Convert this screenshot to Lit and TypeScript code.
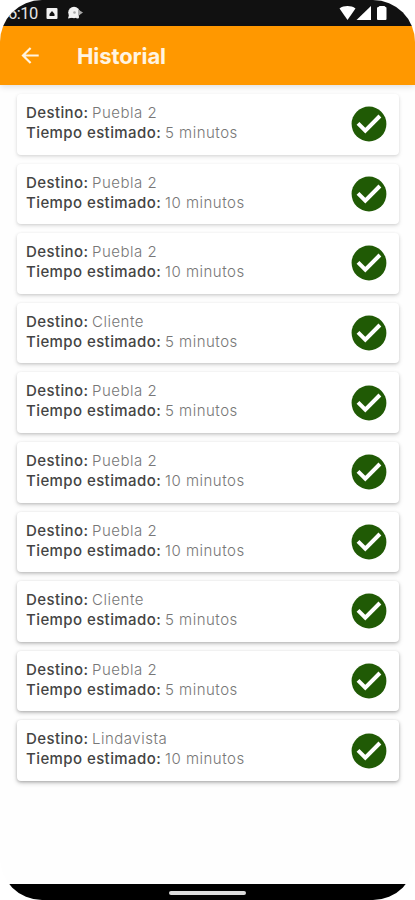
import { LitElement, html, css } from "lit";
import { customElement, property } from "lit/decorators.js";

interface Trip {
  place: string;
  time: string;
}

const trips: Trip[] = [
  { place: "Puebla 2", time: "5 minutos" },
  { place: "Puebla 2", time: "10 minutos" },
  { place: "Puebla 2", time: "10 minutos" },
  { place: "Cliente", time: "5 minutos" },
  { place: "Puebla 2", time: "5 minutos" },
  { place: "Puebla 2", time: "10 minutos" },
  { place: "Puebla 2", time: "10 minutos" },
  { place: "Cliente", time: "5 minutos" },
  { place: "Puebla 2", time: "5 minutos" },
  { place: "Lindavista", time: "10 minutos" },
];

@customElement("trip-card")
class TripCard extends LitElement {
  @property({ attribute: false }) trip!: Trip;

  static styles = css`
    :host {
      display: flex;
      justify-content: space-between;
      align-items: center;
      box-sizing: border-box;
      height: 60.6px;
      padding: 0 12px 0 9px;
      border-radius: 4px;
      background: #fff;
      box-shadow: 0 1px 3px rgba(0, 0, 0, calc(0.1 + var(--depth) * 0.1)),
        0 2px 5px rgba(0, 0, 0, calc(0.08 + var(--depth) * 0.12));
    }
    .lines {
      padding-bottom: 2.6px;
    }
    .line {
      display: flex;
      height: 20px;
      line-height: 20px;
      font-size: 15px;
      white-space: nowrap;
    }
    .label {
      font-weight: 500;
      color: #444;
    }
    .dest {
      width: 66px;
      letter-spacing: 0.4px;
    }
    .est {
      width: 139px;
      letter-spacing: 0.41px;
    }
    .value {
      font-weight: 300;
      color: #777;
      letter-spacing: 0.5px;
    }
    svg {
      display: block;
      width: 36px;
      height: 36px;
    }
  `;

  render() {
    return html`
      <div class="lines">
        <div class="line"><span class="label dest">Destino:</span><span class="value">${this.trip.place}</span></div>
        <div class="line"><span class="label est">Tiempo estimado:</span><span class="value">${this.trip.time}</span></div>
      </div>
      <svg viewBox="0 0 36 36">
        <circle cx="18" cy="18" r="17.4" fill="#205a05" />
        <path d="M7 17.4 14.3 24.7 28.9 10" fill="none" stroke="#fff" stroke-width="4" />
      </svg>
    `;
  }
}

@customElement("app-root")
class AppRoot extends LitElement {
  static styles = css`
    :host {
      display: block;
      width: 415px;
      height: 900px;
      background: #fff;
      font-family: Inter, "Open Sans", sans-serif;
    }
    .screen {
      display: flex;
      flex-direction: column;
      height: 900px;
      border-radius: 42px;
      overflow: hidden;
      background: #fefefe;
    }
    .status {
      display: flex;
      justify-content: space-between;
      flex: none;
      height: 25.5px;
      background: #111;
      color: #e6e6e6;
    }
    .left {
      display: flex;
      padding-left: 8px;
    }
    .clock {
      width: 37px;
      font: 400 16.5px/28px Roboto, sans-serif;
      letter-spacing: -0.5px;
    }
    svg {
      display: block;
    }
    .bar {
      display: flex;
      align-items: center;
      flex: none;
      height: 59.5px;
      padding-left: 18px;
      background: #ff9800;
      color: #fff4e2;
      box-shadow: 0 2px 6px rgba(0, 0, 0, 0.12);
    }
    .title {
      margin: 2px 0 0 35px;
      font-size: 22px;
      line-height: 28px;
      font-weight: 700;
      letter-spacing: -0.1px;
    }
    .list {
      display: flex;
      flex-direction: column;
      flex: 1;
      gap: 9px;
      padding: 9px 16px 0 17px;
    }
    .nav {
      display: flex;
      justify-content: center;
      flex: none;
      height: 16.5px;
      background: #000;
    }
    .pill {
      width: 77px;
      height: 4px;
      margin-top: 7px;
      border-radius: 2px;
      background: #dcdcdc;
    }
  `;

  render() {
    return html`
      <div class="screen">
        <div class="status">
          <div class="left">
            <span class="clock">6:10</span>
            <svg width="40" height="25" viewBox="0 0 40 25">
              <rect x="1.5" y="8" width="11" height="11" rx="1" fill="#f2f2f2" />
              <path d="M4.5 16V14L7 11 9.5 14V16Z" fill="#111" />
              <circle cx="29" cy="12.5" r="5.8" fill="#f2f2f2" />
              <path d="M23 18.5 24.5 13 28 17.5Z" fill="#f2f2f2" />
              <path d="M33 9.5 38 12.5 33 16Z" fill="#aaa" />
              <circle cx="32.5" cy="17" r="1.6" fill="#eee" />
              <circle cx="29.5" cy="12.5" r="1.3" fill="#aaa" />
            </svg>
          </div>
          <svg width="78" height="25" viewBox="337 0 78 25">
            <path d="M339.5 8.5C344 5.3 351 5.3 355.5 8.5L347.5 20Z" fill="#fff" />
            <path d="M356.5 20 371 6V20Z" fill="#fff" />
            <path d="M378.5 7Q379 6 380 6H384Q385 6 385.5 7Q386.5 7 386.5 8V19Q386.5 20 385.5 20H378Q377 20 377 19V8Q377 7 378.5 7Z" fill="#fff" />
          </svg>
        </div>
        <div class="bar">
          <svg width="24" height="24" viewBox="0 0 24 24">
            <path d="M20.7 12.5H5M12.6 5 5 12.5 12.6 20" fill="none" stroke="#fff4e2" stroke-width="2.2" />
          </svg>
          <h1 class="title">Historial</h1>
        </div>
        <div class="list">
          ${trips.map(
            (trip, i) => html`<trip-card .trip=${trip} style="--depth:${i / (trips.length - 1)}"></trip-card>`
          )}
        </div>
        <div class="nav"><div class="pill"></div></div>
      </div>
    `;
  }
}
